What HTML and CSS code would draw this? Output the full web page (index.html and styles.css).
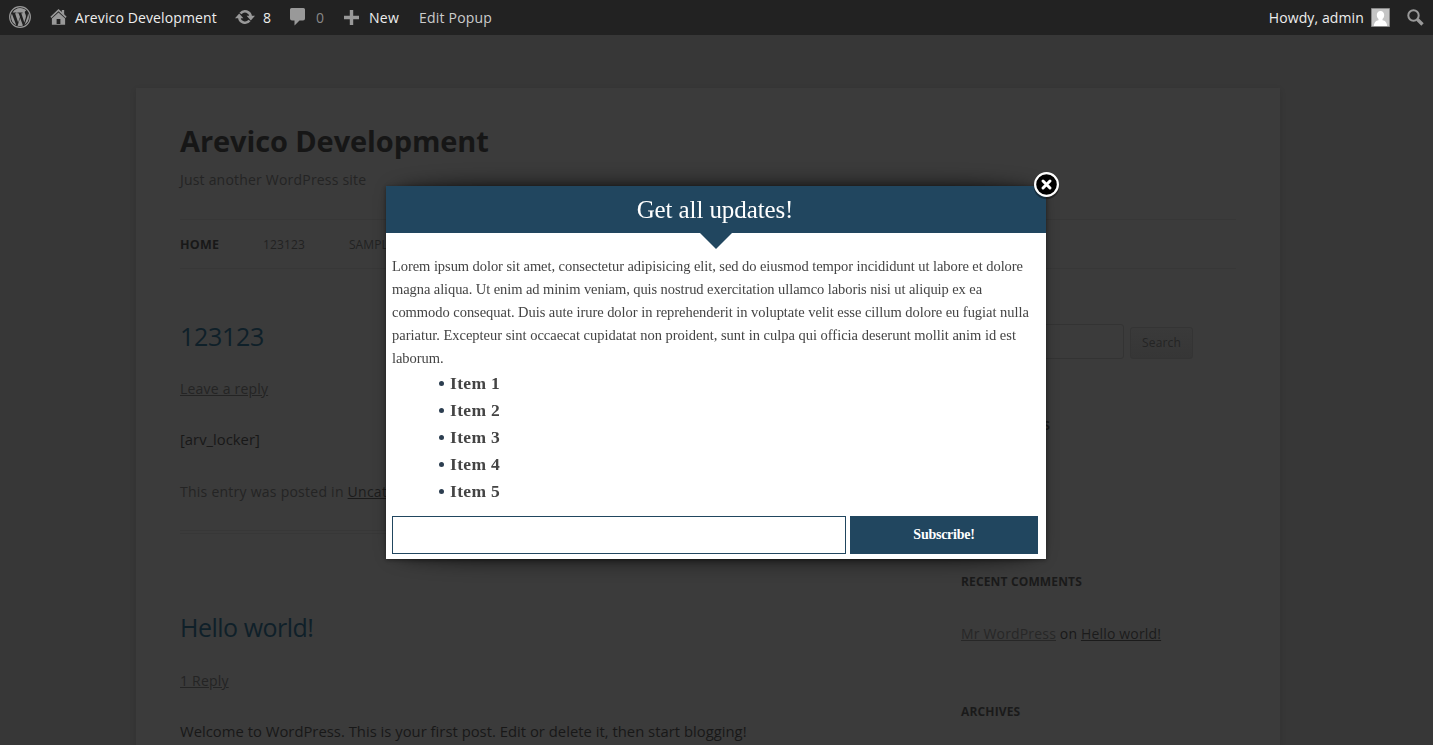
FILE: index.html
```html
<!DOCTYPE html>
<html lang="en">
<head>
<meta charset="utf-8">
<title>Arevico Development</title>
<link rel="stylesheet" href="styles.css">
</head>
<body>
<header class="adminbar">
  <svg class="icon wp" viewBox="0 0 24 24"><circle cx="12" cy="12" r="11.3" fill="none" stroke="#999" stroke-width="1.3"/><path fill="#999" d="M12 2.2c3 0 5.4 1 7 2.6-1.1.2-1.8 1-1.8 2 0 1.3 1.3 2.2 1.3 4.3 0 1.3-.5 2.700-1 4.300l-.8 2.500-3.300-10 1.400-.1V7H9.200v.8l1.300.1 1.500 4-2 6.100L6.600 7.900 8 7.800V7H4c1.700-2.900 4.700-4.800 8-4.800zM3.100 8.200l4.800 12.700C4.500 19.300 2.200 16 2.200 12c0-1.400.3-2.700.9-3.800zM12.200 13.100l3 8.200c-1 .4-2 .6-3.200.6-.9 0-1.800-.1-2.700-.4zM20.700 7.500c.8 1.400 1.100 2.900 1.100 4.500 0 3.500-1.900 6.700-4.800 8.400l3-8.500c.6-1.600.8-3 .7-4.400z"/></svg>
  <svg class="icon home" viewBox="0 0 18 18"><path fill="#999" fill-rule="evenodd" d="M9 0.500 12.500 3.800V1.500H15V6.200L17.600 8.800 16.500 10 9 3 1.500 10 .4 8.800zM2 10.500 9 4.200 16 10.500V17.300H2zM7 11v5.400h4V11z"/></svg>
  <span class="bar-site">Arevico Development</span>
  <svg class="icon update" viewBox="0 0 20 16"><path fill="none" stroke="#999" stroke-width="2.600" d="M4.300 8.500a5.700 5.700 0 0 0 10.200 3M15.700 7.500a5.700 5.700 0 0 0-10.200-3"/><path fill="#999" d="M0 9.300 4.200 4.600l4.200 4.700zM11.600 6.700H20l-4.200 4.700z"/></svg>
  <span class="bar-count">8</span>
  <svg class="icon bubble" viewBox="0 0 15 18"><path fill="#999" d="M1.500 0h12Q15 0 15 1.500v9Q15 12.500 13 12.500H9.500L4.500 17.500V12.500H2Q0 12.500 0 10.500v-9Q0 0 1.500 0z"/></svg>
  <span class="bar-zero">0</span>
  <svg class="icon plus" viewBox="0 0 15 15"><path fill="#999" d="M5.800 0h3.400v5.800H15v3.400H9.200V15H5.800V9.200H0V5.800h5.800z"/></svg>
  <span class="bar-new">New</span>
  <span class="bar-edit">Edit Popup</span>
  <span class="bar-user">Howdy, admin</span>
  <svg class="icon avatar" viewBox="0 0 19 19"><path fill="#c4c4c4" stroke="#888" d="M.5.500h18v18H.5z"/><path fill="#fff" d="M9.500 3c2.300 0 3.700 1.700 3.700 4 0 1.900-.8 3.200-1.700 4v1.200c2.700.6 4.400 2 4.700 5.800H2.800c.3-3.800 2-5.200 4.700-5.800V11c-.9-.8-1.700-2.100-1.700-4 0-2.300 1.400-4 3.700-4z"/></svg>
  <svg class="icon search-icon" viewBox="0 0 17 17"><circle cx="6.500" cy="6.500" r="5.200" fill="none" stroke="#999" stroke-width="2"/><path stroke="#999" stroke-width="3.400" d="m10.500 10.500 5 5"/></svg>
</header>

<div class="page">
  <h1 class="site-title">Arevico Development</h1>
  <p class="tagline">Just another WordPress site</p>
  <nav class="menu"><span class="current">HOME</span><span>123123</span><span>SAMPLE PAGE</span></nav>
  <div class="columns">
    <main class="posts">
      <article class="post">
        <h2 class="post-title">123123</h2>
        <p class="replies"><a class="link">Leave a reply</a></p>
        <p class="body-text">[arv_locker]</p>
        <p class="meta">This entry was posted in <a class="link dark">Uncategorized</a></p>
      </article>
      <article class="post last">
        <h2 class="post-title hello">Hello world!</h2>
        <p class="replies"><a class="link">1 Reply</a></p>
        <p class="body-text">Welcome to WordPress. This is your first post. Edit or delete it, then start blogging!</p>
      </article>
    </main>
    <aside class="sidebar">
      <div class="search"><span class="search-field"></span><span class="search-button">Search</span></div>
      <h3 class="widget-title recent-posts">RECENT POSTS</h3>
      <h3 class="widget-title">RECENT COMMENTS</h3>
      <p class="comment"><a class="link faint">Mr WordPress</a> on <a class="link dark">Hello world!</a></p>
      <h3 class="widget-title archives">ARCHIVES</h3>
    </aside>
  </div>
</div>

<section class="popup">
  <svg class="close" viewBox="0 0 30 32"><circle cx="15" cy="16.500" r="12.800" fill="#000" opacity=".35"/><circle cx="15" cy="14.500" r="11.400" fill="#000" stroke="#fff" stroke-width="2.200"/><path stroke="#fff" stroke-width="3" stroke-linecap="round" d="m11.500 11 7 7m0-7-7 7"/></svg>
  <h2 class="popup-title">Get all updates!</h2>
  <div class="popup-body">
    <p class="lorem"><span>Lorem ipsum dolor sit amet, consectetur adipisicing elit, sed do eiusmod tempor incididunt ut labore et dolore</span><br><span class="tight">magna aliqua. Ut enim ad minim veniam, quis nostrud exercitation ullamco laboris nisi ut aliquip ex ea</span><br><span class="loose">commodo consequat. Duis aute irure dolor in reprehenderit in voluptate velit esse cillum dolore eu fugiat nulla</span><br><span class="looser">pariatur. Excepteur sint occaecat cupidatat non proident, sunt in culpa qui officia deserunt mollit anim id est</span><br>laborum.</p>
    <ul class="items"><li>Item 1</li><li>Item 2</li><li>Item 3</li><li>Item 4</li><li>Item 5</li></ul>
    <div class="form"><input class="email" type="text"><button class="subscribe">Subscribe!</button></div>
  </div>
</section>
</body>
</html>
```

FILE: styles.css
```css
* { box-sizing: border-box; margin: 0; padding: 0; }
body { width: 1433px; height: 745px; overflow: hidden; background: #373737; font-family: "Open Sans", sans-serif; font-size: 14px; color: #181818; white-space: nowrap; }

.adminbar { display: flex; align-items: center; height: 35px; padding: 0 9px; background: #222; color: #eee; font-size: 14px; line-height: 34px; letter-spacing: .12px; }
.icon { display: block; flex: none; margin-bottom: 1px; }
.wp { width: 22px; height: 22px; margin-right: 19px; }
.home { width: 17px; height: 18px; margin-right: 8px; }
.bar-site { width: 160px; }
.update { width: 20px; height: 16px; margin-right: 8px; }
.bar-count { width: 27px; }
.bubble { width: 15px; height: 18px; margin-right: 11px; }
.bar-zero { width: 28px; color: #888; }
.plus { width: 15px; height: 15px; margin-right: 10px; }
.bar-new { width: 50px; letter-spacing: .3px; }
.bar-edit { color: #ccc; letter-spacing: .2px; }
.bar-user { margin-left: auto; margin-right: 7px; }
.avatar { width: 19px; height: 19px; margin-right: 17px; }
.search-icon { width: 17px; height: 17px; }

.page { width: 1144px; height: 657px; margin: 53px 0 0 136px; padding: 29px 44px 0; background: #3b3b3b; box-shadow: 0 2px 6px rgba(0,0,0,.12); overflow: hidden; }
.site-title { font-size: 29px; font-weight: 700; line-height: 48px; letter-spacing: -.1px; color: #161616; }
.tagline { margin-top: 1px; line-height: 28px; letter-spacing: .2px; color: #242424; }
.menu { display: flex; gap: 44px; height: 50px; margin-top: 25px; border-top: 1px solid #373737; border-bottom: 1px solid #373737; font-size: 12px; line-height: 49px; letter-spacing: .1px; color: #222; }
.current { font-weight: 700; font-size: 12.5px; letter-spacing: .2px; color: #181818; }
.columns { display: flex; }
.posts { flex: none; width: 781px; padding-top: 47px; }
.post { height: 218px; margin-bottom: 73px; border-bottom: 4px double #373737; }
.last { height: auto; margin: 0; border: 0; }
.post-title { font-size: 25px; font-weight: 400; line-height: 40px; letter-spacing: -.3px; color: #0f2029; }
.hello { margin-bottom: 22px; letter-spacing: -.5px; }
.replies { margin-top: 21px; line-height: 24px; letter-spacing: .2px; }
.link { color: #242424; text-decoration: underline; }
.dark { color: #1b1b1b; }
.faint { color: #272727; }
.body-text { margin-top: 26px; font-size: 14.8px; line-height: 24px; letter-spacing: .015px; }
.meta { margin-top: 29px; line-height: 24px; letter-spacing: .25px; color: #242424; }

.sidebar { flex: none; width: 275px; padding-top: 55px; }
.search { display: flex; gap: 6px; align-items: flex-end; height: 35px; }
.search-field { width: 163px; height: 35px; border: 1px solid #333; border-radius: 3px; }
.search-button { width: 63px; height: 32px; border: 1px solid #343434; border-radius: 3px; background: linear-gradient(#3a3a3a, #363636); color: #242424; font-size: 12px; line-height: 30px; letter-spacing: .15px; text-align: center; }
.widget-title { font-size: 12px; font-weight: 700; line-height: 24px; letter-spacing: .15px; color: #1a1a1a; }
.recent-posts { margin: 55px 0 132px; letter-spacing: .25px; }
.comment { margin-top: 28px; line-height: 24px; letter-spacing: .17px; }
.archives { margin-top: 54px; }

.popup { position: absolute; left: 386px; top: 186px; width: 660px; height: 373px; background: #fff; box-shadow: 0 1px 4px rgba(0,0,0,.4); font-family: "Liberation Serif", serif; z-index: 1; transform-style: preserve-3d; }
.popup::before { content: ""; position: absolute; inset: 0 10px; border-radius: 100px / 10px; box-shadow: 0 0 20px rgba(0,0,0,.8); transform: translateZ(-1px); }
.close { position: absolute; left: 645px; top: -16px; width: 31px; height: 32px; }
.popup-title { height: 47px; padding-right: 2px; background: #21465f; color: #fff; font-size: 25px; font-weight: 400; line-height: 47px; letter-spacing: -.1px; text-align: center; }
.popup-title::after { content: ""; position: absolute; left: 314px; top: 47px; border: 16px solid transparent; border-top-color: #21465f; border-bottom: 0; }
.popup-body { padding: 22px 8px 0 6px; }
.lorem { font-size: 14.500px; line-height: 23px; letter-spacing: -.063px; color: #444; }
.tight { letter-spacing: -.082px; }
.loose { letter-spacing: -.042px; }
.looser { letter-spacing: -.014px; }
.items { list-style: none; padding-left: 46px; font-size: 17.500px; font-weight: 700; line-height: 27px; letter-spacing: .35px; color: #444; }
.items li { display: flex; align-items: center; }
.items li::before { content: ""; width: 5px; height: 5px; margin: 0 6px 0 1px; border-radius: 50%; background: #2c3e50; }
.form { display: flex; gap: 4px; margin-top: 11px; }
.email { width: 454px; height: 38px; border: 1px solid #21465f; background: #fff; }
.subscribe { width: 188px; height: 38px; border: 0; background: #21465f; color: #fff; font: 700 14px "Liberation Serif", serif; letter-spacing: -.25px; }
```
